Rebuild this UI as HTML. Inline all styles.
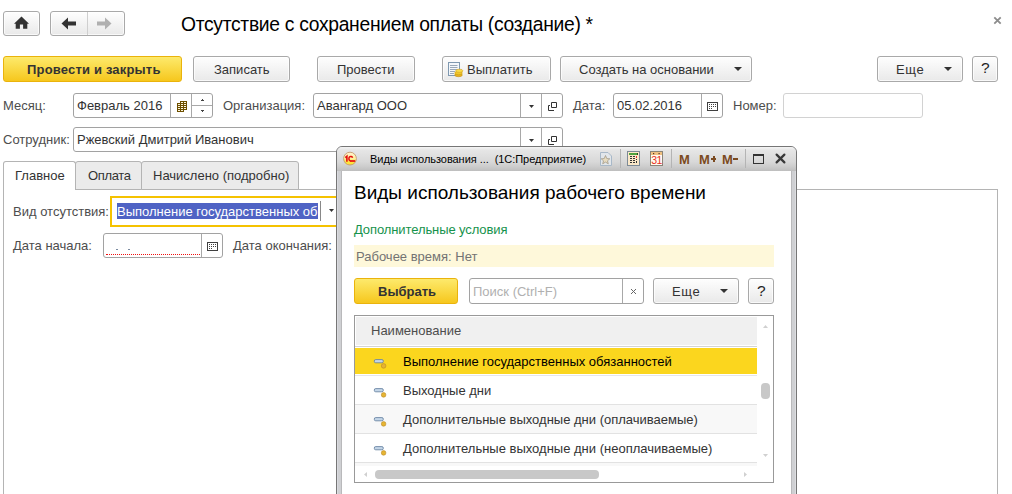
<!DOCTYPE html>
<html><head><meta charset="utf-8">
<style>
*{margin:0;padding:0;box-sizing:border-box}
html,body{width:1012px;height:494px;overflow:hidden;background:#fff;font-family:"Liberation Sans",sans-serif;font-size:13px;color:#333}
.a{position:absolute}
.t{position:absolute;white-space:nowrap;line-height:1}
.btn{position:absolute;border:1px solid #a9a9a9;border-radius:3px;background:linear-gradient(#fefefe,#e9e9e9);height:26px;top:56px;box-shadow:inset 0 0 0 1px rgba(255,255,255,.7)}
.ybtn{position:absolute;border:1px solid #eab30c;border-radius:3px;background:linear-gradient(#fdea6c,#f6c71d)}
.inp{position:absolute;border:1px solid #a2a2a2;border-radius:3px;background:#fff}
.lbl{position:absolute;white-space:nowrap;line-height:1;color:#4d4d4d}
.vl{position:absolute;width:1px;background:#a8a8a8}
</style></head><body>

<!-- home -->
<div class="btn" style="left:3px;top:11px;width:37px;height:25px"></div>
<svg class="a" style="left:14px;top:16px" width="16" height="14" viewBox="0 0 16 14"><path d="M7.5 0.6 L15 7.8 L13.3 7.8 L13.3 12.8 L9.1 12.8 L9.1 8.6 L5.9 8.6 L5.9 12.8 L1.7 12.8 L1.7 7.8 L0 7.8 Z" fill="#333"/></svg>
<!-- back/forward -->
<div class="btn" style="left:50px;top:11px;width:75px;height:25px"></div>
<div class="vl" style="left:87px;top:12px;height:23px;background:#cfcfcf"></div>
<svg class="a" style="left:61px;top:17px" width="16" height="13" viewBox="0 0 16 13"><path d="M0.5 6.5 L7 0.5 L7 4.5 L15 4.5 L15 8.5 L7 8.5 L7 12.5 Z" fill="#333"/></svg>
<svg class="a" style="left:96px;top:17px" width="16" height="13" viewBox="0 0 16 13"><path d="M15.5 6.5 L9 0.5 L9 4.5 L1 4.5 L1 8.5 L9 8.5 L9 12.5 Z" fill="#b0b0b0"/></svg>

<div class="t" style="left:181px;top:15px;font-size:19.3px;letter-spacing:-0.3px;color:#000">Отсутствие с сохранением оплаты (создание) *</div>
<svg class="a" style="left:993px;top:16px" width="9" height="9" viewBox="0 0 9 9"><path d="M1.3 1.3L7.7 7.7M7.7 1.3L1.3 7.7" stroke="#8c8c8c" stroke-width="1.8"/></svg>

<!-- toolbar -->
<div class="ybtn" style="left:3px;top:56px;width:179px;height:26px"></div>
<div class="t" style="left:27px;top:63px;font-weight:bold;color:#333;letter-spacing:0.18px">Провести и закрыть</div>
<div class="btn" style="left:193px;width:97px"></div>
<div class="t" style="left:214px;top:63px">Записать</div>
<div class="btn" style="left:317px;width:98px"></div>
<div class="t" style="left:337px;top:63px">Провести</div>
<div class="btn" style="left:442px;width:109px"></div>
<svg class="a" style="left:447px;top:61px" width="17" height="17" viewBox="0 0 17 17">
 <rect x="1.5" y="1.5" width="11" height="13" fill="#f4f7fa" stroke="#7f98b0"/>
 <path d="M3 4.5h7.5M3 6.5h7.5M3 8.5h7.5M3 10.5h5M3 12.5h4" stroke="#9aa8b8" stroke-width="1"/>
 <ellipse cx="11.5" cy="14" rx="3.8" ry="1.7" fill="#e8b41c" stroke="#c08a10" stroke-width="0.6"/>
 <ellipse cx="11.5" cy="12" rx="3.8" ry="1.7" fill="#f2c828" stroke="#c89a18" stroke-width="0.6"/>
 <ellipse cx="12.3" cy="9.8" rx="3.6" ry="1.6" fill="#fadc48" stroke="#d0a020" stroke-width="0.6"/>
</svg>
<div class="t" style="left:467px;top:63px">Выплатить</div>
<div class="btn" style="left:560px;width:192px"></div>
<div class="t" style="left:579px;top:63px">Создать на основании</div>
<svg class="a" style="left:734px;top:67px" width="8" height="4"><path d="M0 0H8L4 4Z" fill="#333"/></svg>
<div class="btn" style="left:877px;width:86px"></div>
<div class="t" style="left:896px;top:63px;letter-spacing:0.6px">Еще</div>
<svg class="a" style="left:944px;top:67px" width="8" height="4"><path d="M0 0H8L4 4Z" fill="#333"/></svg>
<div class="btn" style="left:972px;width:26px"></div>
<div class="t" style="left:981px;top:60px;font-size:15.5px;color:#222">?</div>

<!-- row 2 -->
<div class="lbl" style="left:3px;top:99px">Месяц:</div>
<div class="inp" style="left:73px;top:93px;width:140px;height:25px"></div>
<div class="t" style="left:77px;top:99px">Февраль 2016</div>
<div class="vl" style="left:170px;top:94px;height:23px"></div>
<div class="vl" style="left:191px;top:94px;height:23px"></div>
<div class="a" style="left:192px;top:105px;width:20px;height:1px;background:#a8a8a8"></div>

<div class="lbl" style="left:223px;top:99px">Организация:</div>
<div class="inp" style="left:313px;top:93px;width:250px;height:25px"></div>
<div class="t" style="left:317px;top:99px">Авангард ООО</div>
<div class="vl" style="left:520px;top:94px;height:23px"></div>
<div class="vl" style="left:541px;top:94px;height:23px"></div>

<div class="lbl" style="left:573px;top:99px">Дата:</div>
<div class="inp" style="left:613px;top:93px;width:110px;height:25px"></div>
<div class="t" style="left:617px;top:99px">05.02.2016</div>
<div class="vl" style="left:701px;top:94px;height:23px"></div>

<div class="lbl" style="left:733px;top:99px">Номер:</div>
<div class="inp" style="left:783px;top:93px;width:140px;height:25px;border-color:#d2d2d2"></div>

<!-- row 3 -->
<div class="lbl" style="left:3px;top:133px">Сотрудник:</div>
<div class="inp" style="left:73px;top:127px;width:490px;height:25px"></div>
<div class="t" style="left:77px;top:133px">Ржевский Дмитрий Иванович</div>
<div class="vl" style="left:520px;top:128px;height:23px"></div>
<div class="vl" style="left:541px;top:128px;height:23px"></div>

<!-- tabs -->
<div class="a" style="left:3px;top:189px;width:995px;height:310px;border:1px solid #b4b4b4"></div>
<div class="a" style="left:75px;top:161px;width:67px;height:29px;border:1px solid #b4b4b4;border-radius:3px 3px 0 0;background:#ebebeb"></div>
<div class="a" style="left:141px;top:161px;width:158px;height:29px;border:1px solid #b4b4b4;border-radius:3px 3px 0 0;background:#ebebeb"></div>
<div class="a" style="left:3px;top:161px;width:73px;height:29px;border:1px solid #b4b4b4;border-bottom:none;border-radius:3px 3px 0 0;background:#fff"></div>
<div class="t" style="left:15px;top:169px">Главное</div>
<div class="t" style="left:88px;top:169px;letter-spacing:-0.35px">Оплата</div>
<div class="t" style="left:153px;top:169px">Начислено (подробно)</div>

<!-- panel content -->
<div class="lbl" style="left:13px;top:205px">Вид отсутствия:</div>
<div class="a" style="left:110px;top:196px;width:240px;height:31px;border:2px solid #f5c200;background:#fff"></div>
<div class="a" style="left:117px;top:203px;width:201px;height:16px;background:#4f63c4"></div>
<div class="t" style="left:117px;top:205px;color:#fff">Выполнение государственных об</div>
<div class="vl" style="left:320px;top:201px;height:20px;background:#888"></div>
<svg class="a" style="left:329px;top:209px" width="5" height="3"><path d="M0 0H5L2.5 3Z" fill="#333"/></svg>

<div class="lbl" style="left:13px;top:239px">Дата начала:</div>
<div class="inp" style="left:103px;top:233px;width:120px;height:25px"></div>
<div class="vl" style="left:201px;top:234px;height:23px"></div>
<div class="t" style="left:233px;top:239px;color:#4d4d4d">Дата окончания:</div>



<!-- field icons -->
<svg class="a" style="left:177px;top:101px" width="10" height="11" viewBox="0 0 10 11" shape-rendering="crispEdges">
 <path d="M3 0H10V9H7V11H0V2H3Z" fill="#6e5000"/>
 <path d="M4 1h2v1h-2zM7 1h2v1h-2zM1 3h2v1h-2zM4 3h2v1h-2zM7 3h2v1h-2zM1 5h2v1h-2zM4 5h2v1h-2zM7 5h2v1h-2zM1 7h2v1h-2zM4 7h2v1h-2zM7 7h2v1h-2zM1 9h2v1h-2zM4 9h2v1h-2z" fill="#fff8e0"/>
</svg>
<svg class="a" style="left:201px;top:99px" width="3" height="2" shape-rendering="crispEdges"><path d="M1 0h1v1h1v1h-3v-1h1z" fill="#444"/></svg>
<svg class="a" style="left:201px;top:110px" width="3" height="2" shape-rendering="crispEdges"><path d="M0 0h3v1h-1v1h-1v-1h-1z" fill="#444"/></svg>
<svg class="a" style="left:529px;top:105px" width="5" height="3"><path d="M0 0H5L2.5 3Z" fill="#333"/></svg>
<svg class="a" style="left:547px;top:102px" width="11" height="10" viewBox="0 0 11 10"><path d="M4.5 0.5h5v5h-5z" fill="none" stroke="#333"/><path d="M3 3.5h-1.5v5h5.5" fill="none" stroke="#333"/></svg>
<svg class="a" style="left:529px;top:139px" width="5" height="3"><path d="M0 0H5L2.5 3Z" fill="#333"/></svg>
<svg class="a" style="left:547px;top:136px" width="11" height="10" viewBox="0 0 11 10"><path d="M4.5 0.5h5v5h-5z" fill="none" stroke="#333"/><path d="M3 3.5h-1.5v5h5.5" fill="none" stroke="#333"/></svg>
<svg class="a" style="left:707px;top:102px" width="11" height="9" viewBox="0 0 11 9" shape-rendering="crispEdges"><path d="M0 0H11V9H0ZM1 1V8H10V1Z" fill="#404040" fill-rule="evenodd"/><path d="M2 2h1v1h-1zM4 2h1v1h-1zM6 2h1v1h-1zM8 2h1v1h-1zM2 4h1v1h-1zM4 4h1v1h-1zM6 4h1v1h-1zM8 4h1v1h-1zM2 6h1v1h-1zM4 6h1v1h-1z" fill="#404040"/></svg>
<svg class="a" style="left:207px;top:242px" width="11" height="9" viewBox="0 0 11 9" shape-rendering="crispEdges"><path d="M0 0H11V9H0ZM1 1V8H10V1Z" fill="#404040" fill-rule="evenodd"/><path d="M2 2h1v1h-1zM4 2h1v1h-1zM6 2h1v1h-1zM8 2h1v1h-1zM2 4h1v1h-1zM4 4h1v1h-1zM6 4h1v1h-1zM8 4h1v1h-1zM2 6h1v1h-1zM4 6h1v1h-1z" fill="#404040"/></svg>
<div class="a" style="left:116px;top:249px;width:2px;height:1px;background:#7a8aa0"></div><div class="a" style="left:128px;top:249px;width:2px;height:1px;background:#7a8aa0"></div>
<div class="a" style="left:106px;top:254px;width:94px;height:0;border-top:1px dotted #f01010"></div>
<!-- popup window -->
<div class="a" style="left:336px;top:146px;width:461px;height:360px;border:1px solid #767676;border-radius:6px 6px 0 0;background:linear-gradient(90deg,#dadbe0 0 1px,#cfd0d3 1px 4px,#b9b9bb 4px 5px,#fff 5px 454px,#b9b9bb 454px 455px,#cfd0d3 455px 458px,#dcdde0 458px)"></div>
<div class="a" style="left:337px;top:147px;width:459px;height:24px;border-radius:5px 5px 0 0;background:linear-gradient(#f4f4f4 0px,#e6e6e6 3px,#d8d8d8 15px,#cbcbcb 20px,#bebebe 24px)"></div>

<svg class="a" style="left:341px;top:151px" width="18" height="16" viewBox="0 0 18 16">
 <defs><linearGradient id="g1c" x1="0" y1="0" x2="0" y2="1"><stop offset="0" stop-color="#fff4d0"/><stop offset="0.5" stop-color="#fdf0a0"/><stop offset="0.75" stop-color="#fde640"/><stop offset="1" stop-color="#fde030"/></linearGradient></defs>
 <circle cx="9" cy="7.6" r="6.4" fill="url(#g1c)" stroke="#c49a72" stroke-width="0.9"/>
 <path d="M4.3 6.6 L5.9 5.3 V10.7" stroke="#e40f0f" stroke-width="1.6" fill="none"/>
 <path d="M11.6 6.7 C11.2 5.4 9.3 4.9 8.4 6 C7.6 7 7.7 9.4 9.2 9.9" stroke="#e40f0f" stroke-width="1.5" fill="none"/>
 <path d="M9 10 H14.2" stroke="#e40f0f" stroke-width="1.7"/>
</svg>
<div class="t" style="left:370px;top:154px;font-size:11px;letter-spacing:-0.05px;color:#000">Виды использования ...&nbsp; (1С:Предприятие)</div>
<!-- title bar icons -->
<svg class="a" style="left:599px;top:151px" width="14" height="16" viewBox="0 0 14 16">
 <path d="M1.5 1.5 H9 L12.5 5 V14.5 H1.5 Z" fill="#e2e6ea" stroke="#a8b8c8"/>
 <path d="M6.5 4.5 L7.8 7.6 L10.8 7.8 L8.5 9.8 L9.3 12.8 L6.5 11.1 L3.7 12.8 L4.5 9.8 L2.2 7.8 L5.2 7.6 Z" fill="#e8dcc0" stroke="#9a9080" stroke-width="0.7"/>
</svg>
<div class="a" style="left:620px;top:149px;width:1px;height:19px;background:#b4b4b4"></div>
<svg class="a" style="left:627px;top:151px" width="13" height="15" viewBox="0 0 13 15" shape-rendering="crispEdges">
 <rect x="0.5" y="0.5" width="12" height="14" fill="#fbe8c8" stroke="#7d8a96"/>
 <rect x="2" y="2" width="9" height="2" fill="#4ea23e"/><rect x="10" y="2" width="1" height="2" fill="#2a4a20"/>
 <path d="M3 5h2v1h-2zM6 5h2v1h-2zM3 7h2v1h-2zM6 7h2v1h-2zM3 9h2v1h-2zM6 9h2v1h-2zM3 11h2v1h-2zM6 11h2v1h-2zM9 8h1v1h-1zM9 10h1v2h-1z" fill="#333"/>
 <path d="M9 5h1v2h-1z" fill="#e03030"/>
</svg>
<svg class="a" style="left:650px;top:151px" width="13" height="15" viewBox="0 0 13 15">
 <rect x="0.5" y="0.5" width="12" height="14" fill="#fffaf0" stroke="#8a8478"/>
 <rect x="1" y="1" width="11" height="3" fill="#f0c080"/>
 <rect x="3" y="2" width="1.2" height="1.2" fill="#553322"/><rect x="8.5" y="2" width="1.2" height="1.2" fill="#553322"/>
 <text x="6.6" y="13.3" font-family="Liberation Sans" font-size="10.5" fill="#e83020" text-anchor="middle" letter-spacing="-0.4">31</text>
</svg>
<div class="a" style="left:671px;top:149px;width:1px;height:19px;background:#b4b4b4"></div>



<div class="t" style="left:679px;top:153px;font-size:13px;font-weight:bold;color:#7b4a20">M</div>
<div class="t" style="left:699px;top:153px;font-size:13px;font-weight:bold;color:#7b4a20">M</div>
<div class="a" style="left:711px;top:158px;width:5px;height:2px;background:#7b4a20"></div><div class="a" style="left:712.5px;top:156px;width:2px;height:6px;background:#7b4a20"></div>
<div class="t" style="left:722px;top:153px;font-size:13px;font-weight:bold;color:#7b4a20">M</div>
<div class="a" style="left:733px;top:158px;width:5px;height:2px;background:#7b4a20"></div>
<div class="a" style="left:745px;top:149px;width:1px;height:19px;background:#b4b4b4"></div>
<div class="a" style="left:753px;top:154px;width:11px;height:10px;border:1px solid #333;border-top-width:2px"></div>
<svg class="a" style="left:775px;top:153px" width="11" height="11" viewBox="0 0 11 11"><path d="M1.6 1.6L9.4 9.4M9.4 1.6L1.6 9.4" stroke="#383838" stroke-width="2.2" stroke-linecap="round"/></svg>

<!-- popup content -->
<div class="t" style="left:354px;top:183px;font-size:19px;color:#000">Виды использования рабочего времени</div>
<div class="t" style="left:354px;top:223px;color:#15924c;letter-spacing:-0.1px">Дополнительные условия</div>
<div class="a" style="left:354px;top:245px;width:420px;height:22px;background:#fef8da"></div>
<div class="t" style="left:356px;top:250px;color:#737373">Рабочее время: Нет</div>

<div class="ybtn" style="left:354px;top:278px;width:104px;height:26px"></div>
<div class="t" style="left:378px;top:285px;font-weight:bold;color:#333">Выбрать</div>
<div class="inp" style="left:469px;top:278px;width:175px;height:26px"></div>
<div class="t" style="left:473px;top:285px;color:#b0b0b0">Поиск (Ctrl+F)</div>
<div class="vl" style="left:622px;top:279px;height:24px"></div>
<svg class="a" style="left:630px;top:288px" width="7" height="7" viewBox="0 0 7 7"><path d="M1 1L6 6M6 1L1 6" stroke="#666" stroke-width="1"/></svg>
<div class="btn" style="left:653px;top:278px;width:86px"></div>
<div class="t" style="left:672px;top:285px;letter-spacing:0.6px">Еще</div>
<svg class="a" style="left:720px;top:289px" width="8" height="4"><path d="M0 0H8L4 4Z" fill="#333"/></svg>
<div class="btn" style="left:748px;top:278px;width:26px"></div>
<div class="t" style="left:757px;top:283px;font-size:15.5px;color:#222">?</div>

<!-- table -->
<div class="a" style="left:354px;top:315px;width:420px;height:168px;border:1px solid #999;background:#fff"></div>
<div class="a" style="left:356px;top:317px;width:401px;height:28px;background:#f0f0f0"></div>
<div class="a" style="left:355px;top:346px;width:402px;height:1px;background:#d4d4d4"></div>
<div class="t" style="left:371px;top:324px;color:#4d4d4d">Наименование</div>
<div class="a" style="left:355px;top:348px;width:402px;height:26px;background:#fbd61e"></div>
<div class="a" style="left:355px;top:375px;width:402px;height:1px;background:#e6e6ea"></div>
<div class="a" style="left:355px;top:404px;width:402px;height:1px;background:#e2e2e2"></div>
<div class="a" style="left:355px;top:405px;width:402px;height:28px;background:#f8f8f8"></div>
<div class="a" style="left:355px;top:433px;width:402px;height:1px;background:#e2e2e2"></div>
<div class="a" style="left:355px;top:462px;width:402px;height:1px;background:#e2e2e2"></div>
<div class="a" style="left:355px;top:463px;width:402px;height:3px;background:#f8f8f8"></div>
<svg class="a" style="left:373px;top:359px" width="14" height="10" viewBox="0 0 14 10"><rect x="1.3" y="0.6" width="9" height="3.2" rx="1.4" fill="#c4d6e8" stroke="#5d7a9a" stroke-width="0.8"/><circle cx="10.6" cy="6.9" r="2.3" fill="#e6b432" stroke="#b88a28" stroke-width="0.6"/></svg>
<div class="t" style="left:403px;top:355px;color:#000">Выполнение государственных обязанностей</div>
<svg class="a" style="left:373px;top:388px" width="14" height="10" viewBox="0 0 14 10"><rect x="1.3" y="0.6" width="9" height="3.2" rx="1.4" fill="#c4d6e8" stroke="#5d7a9a" stroke-width="0.8"/><circle cx="10.6" cy="6.9" r="2.3" fill="#e6b432" stroke="#b88a28" stroke-width="0.6"/></svg>
<div class="t" style="left:403px;top:384px;color:#333">Выходные дни</div>
<svg class="a" style="left:373px;top:417px" width="14" height="10" viewBox="0 0 14 10"><rect x="1.3" y="0.6" width="9" height="3.2" rx="1.4" fill="#c4d6e8" stroke="#5d7a9a" stroke-width="0.8"/><circle cx="10.6" cy="6.9" r="2.3" fill="#e6b432" stroke="#b88a28" stroke-width="0.6"/></svg>
<div class="t" style="left:403px;top:413px;color:#333">Дополнительные выходные дни (оплачиваемые)</div>
<svg class="a" style="left:373px;top:446px" width="14" height="10" viewBox="0 0 14 10"><rect x="1.3" y="0.6" width="9" height="3.2" rx="1.4" fill="#c4d6e8" stroke="#5d7a9a" stroke-width="0.8"/><circle cx="10.6" cy="6.9" r="2.3" fill="#e6b432" stroke="#b88a28" stroke-width="0.6"/></svg>
<div class="t" style="left:403px;top:442px;color:#333">Дополнительные выходные дни (неоплачиваемые)</div>

<svg class="a" style="left:763px;top:325px" width="5" height="3"><path d="M0 3L2.5 0L5 3Z" fill="#d0d0d0"/></svg>
<div class="a" style="left:761px;top:383px;width:9px;height:16px;border-radius:4px;background:#c8c8c8"></div>
<svg class="a" style="left:763px;top:454px" width="5" height="3"><path d="M0 0L2.5 3L5 0Z" fill="#d0d0d0"/></svg>
<svg class="a" style="left:364px;top:472px" width="3" height="5"><path d="M3 0L0 2.5L3 5Z" fill="#d0d0d0"/></svg>
<div class="a" style="left:375px;top:470px;width:224px;height:9px;border-radius:4px;background:#c8c8c8"></div>
<svg class="a" style="left:744px;top:472px" width="3" height="5"><path d="M0 0L3 2.5L0 5Z" fill="#d0d0d0"/></svg>
</body></html>
